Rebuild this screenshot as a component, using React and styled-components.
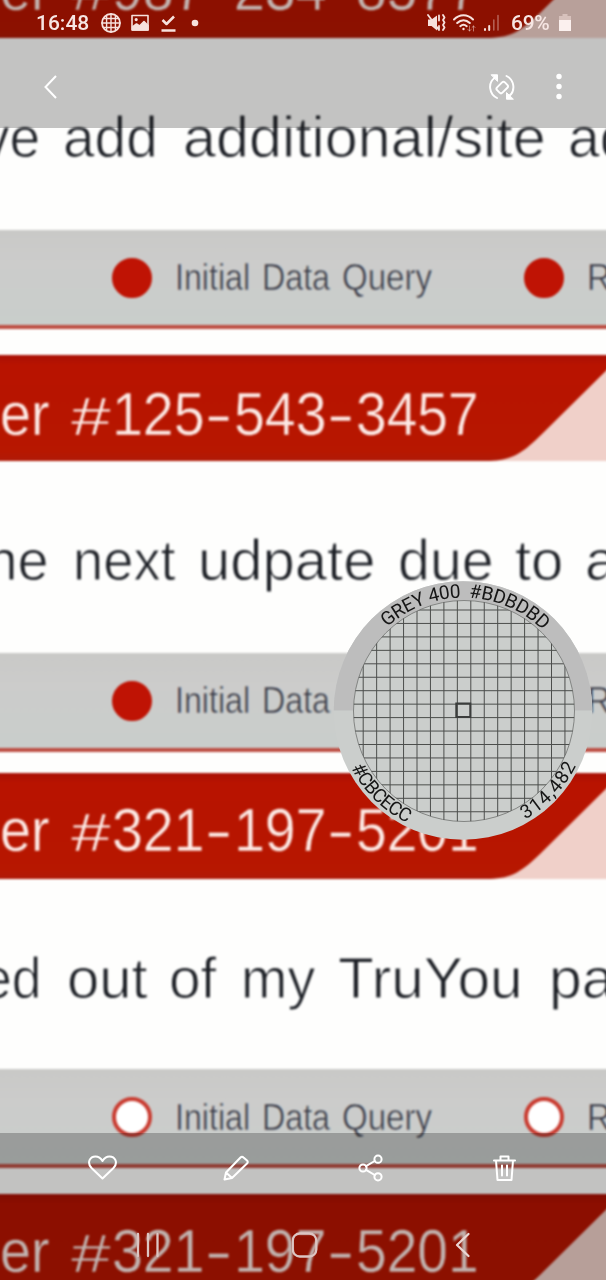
import React, { useLayoutEffect, useRef, useState } from "react";
import styled, { createGlobalStyle } from "styled-components";

const Global = createGlobalStyle`
  * { box-sizing: border-box; }
  body { margin: 0; background: #000; }
`;

const Screen = styled.main`
  position: relative;
  width: 606px;
  height: 1280px;
  overflow: hidden;
  font-family: Roboto, "Liberation Sans", sans-serif;
`;

const Photo = styled.div`
  display: flex;
  flex-direction: column;
  width: 622px;
  height: 1380px;
  margin: -68px 0 0 -8px;
  background: #fefefd;
  filter: blur(0.9px);
  font-family: "Liberation Sans", Arial, sans-serif;
`;

const HeaderBand = styled.div`
  flex: none;
  height: 106px;
  background: #f0d0c9;
`;

const HeaderFill = styled.div`
  height: 106px;
  padding-left: 8px;
  padding-top: ${(p) => p.$drop}px;
  background: linear-gradient(#a91005 0, #b81300 10px, #b71700 96px, #b01a08 106px);
  clip-path: path("M0 0 H630 L552 77 C530 99 520 105 498 106 H0 Z");
`;

const Message = styled.div`
  flex: none;
  height: ${(p) => p.$height}px;
  padding: 70px 0 0 8px;
`;

const Legend = styled.div`
  flex: none;
  display: flex;
  align-items: center;
  height: 95px;
  padding-left: 120px;
  background: linear-gradient(#c9c9c7, #cccccb 35%, #c9cecb);
`;

const Divider = styled.div`
  flex: none;
  height: 4px;
  margin-bottom: ${(p) => p.$gap}px;
  background: #bd4d42;
`;

const Dot = styled.span`
  flex: none;
  width: 40px;
  height: 40px;
  border-radius: 50%;
  border: 4px solid ${(p) => (p.$hollow ? "#c93b30" : "#bf1304")};
  background: ${(p) => (p.$hollow ? "#fff" : "#bf1304")};
`;

const LegendText = styled.div`
  flex: none;
  width: 372px;
  padding-left: 23px;
  margin-top: ${(p) => p.$shift || 0}px;
`;

const Line = styled.div`
  display: flex;
  height: ${(p) => p.$size}px;
  line-height: ${(p) => p.$size}px;
  font-size: ${(p) => p.$size}px;
  color: ${(p) => p.$color};
  -webkit-text-stroke: ${(p) => p.$thin || 0}px ${(p) => p.$ground};
  white-space: nowrap;
`;

const Slot = styled.span`
  flex: none;
  width: ${(p) => p.$width}px;
  margin-left: ${(p) => p.$before}px;
`;

const Stretch = styled.span`
  display: inline-block;
  transform-origin: 0 85%;
`;

function Word({ children, width, before = 0, tall = 1 }) {
  const ref = useRef(null);
  const [scale, setScale] = useState(1);
  useLayoutEffect(() => {
    setScale(width / ref.current.offsetWidth);
  }, [width]);
  return (
    <Slot $width={width} $before={before}>
      <Stretch ref={ref} style={{ transform: `scale(${scale}, ${tall})` }}>
        {children}
      </Stretch>
    </Slot>
  );
}

function Header({ number, drop = 28 }) {
  return (
    <HeaderBand>
      <HeaderFill $drop={drop}>
        <Line $size={62} $color="#fdeae5" $ground="#b71700" $thin={0.5}>
          <Word width={81} before={-31}>ner</Word>
          <Word width={39} before={21} tall={0.86}>#</Word>
          {number.split("-").map((part, i) => (
            <React.Fragment key={i}>
              {i > 0 && <Word width={28} before={1}>-</Word>}
              <Word width={part.length * 30.7} before={i > 0 ? 1 : 2}>{part}</Word>
            </React.Fragment>
          ))}
        </Line>
      </HeaderFill>
    </HeaderBand>
  );
}

function Body({ words, height = 192 }) {
  return (
    <Message $height={height}>
      <Line $size={58} $color="#1d2026" $ground="#fefefd" $thin={1}>
        {words.map(([text, width, before]) => (
          <Word key={text} width={width} before={before}>{text}</Word>
        ))}
      </Line>
    </Message>
  );
}

function Status({ hollow, gap, shift }) {
  return (
    <>
      <Legend>
        <Dot $hollow={hollow} />
        <LegendText $shift={shift}>
          <Line $size={36} $color="#383a46" $ground="#cbcccb" $thin={0.6}>
            <Word width={75}>Initial</Word>
            <Word width={68} before={12}>Data</Word>
            <Word width={90} before={12}>Query</Word>
          </Line>
        </LegendText>
        <Dot $hollow={hollow} />
        <LegendText $shift={shift}>
          <Line $size={36} $color="#383a46" $ground="#cbcccb" $thin={0.6}>
            <Word width={24}>R</Word>
          </Line>
        </LegendText>
      </Legend>
      <Divider $gap={gap} />
    </>
  );
}

const TopShade = styled.header`
  position: absolute;
  inset: 0 0 auto 0;
  height: 128px;
  background: rgba(0, 0, 0, 0.23);
  color: #f6e6e3;
`;

const StatusBar = styled.div`
  display: flex;
  align-items: center;
  justify-content: space-between;
  height: 46px;
  padding: 0 35px 0 36px;
  font-size: 21px;
  font-weight: 500;
  line-height: 46px;
`;

const Group = styled.div`
  display: flex;
  align-items: center;
  gap: ${(p) => p.$gap}px;
`;

const Clock = styled.span`
  width: 55px;
`;

const Percent = styled.span`
  width: 41px;
  margin-left: 4px;
  letter-spacing: -0.3px;
`;

const ToolBar = styled.div`
  display: flex;
  align-items: center;
  justify-content: space-between;
  height: 82px;
  padding: 0 42px 0 39px;
`;

const BottomShade = styled.footer`
  position: absolute;
  inset: auto 0 0 0;
  height: 147px;
  background: rgba(0, 0, 0, 0.235);
`;

const Actions = styled.div`
  display: flex;
  justify-content: space-between;
  align-items: center;
  height: 70px;
  padding: 0 86px 0 87px;
`;

const NavKeys = styled.nav`
  display: flex;
  justify-content: space-between;
  align-items: center;
  height: 84px;
  padding: 0 131px 0 131px;
`;

const Glyph = styled.svg`
  display: block;
  flex: none;
  fill: none;
  stroke: ${(p) => p.$tone || "#fff"};
  stroke-width: ${(p) => p.$weight || 2};
  stroke-linecap: round;
  stroke-linejoin: round;
`;

const Picker = styled.svg`
  position: absolute;
  left: 333px;
  top: 580px;
  display: block;
  font-family: Roboto, sans-serif;
  font-size: 19px;
  fill: #161616;
`;

const tint = "#f6e1dd";

function Magnifier() {
  const lines = Array.from({ length: 16 }, (_, i) => 30.2 + i * 13.45);
  return (
    <Picker width="260" height="261" viewBox="0 0 260 261">
      <defs>
        <clipPath id="lens"><circle cx="131" cy="131" r="110.5" /></clipPath>
        <path id="arcTop" d="M17.5 130.5 A113 113 0 0 1 243.5 130.5" />
        <path id="arcBottom" d="M4 130 A126 126 0 0 0 256 130" />
      </defs>
      <circle cx="130" cy="130.5" r="129.3" fill="#cbcecc" />
      <path d="M.7 130.5 A129.3 129.3 0 0 1 259.3 130.5 Z" fill="#bdbdbd" />
      <circle cx="131" cy="131" r="110.5" fill="#cbcecc" stroke="#838583" strokeWidth="1" />
      <g clipPath="url(#lens)" stroke="#4c4e4c" strokeWidth="1">
        {lines.map((p) => <path key={"v" + p} d={`M${p} 10 V250`} />)}
        {lines.map((p) => <path key={"h" + p} d={`M10 ${p - 0.2} H250`} />)}
      </g>
      <rect x="123.3" y="123.5" width="14" height="13.5" fill="none" stroke="#3b3d3c" strokeWidth="2" />
      <text style={{ whiteSpace: "pre" }}>
        <textPath href="#arcTop" startOffset="93.5" textLength="172">{"GREY 400  #BDBDBD"}</textPath>
      </text>
      <text><textPath href="#arcBottom" startOffset="60" textLength="80">#CBCECC</textPath></text>
      <text><textPath href="#arcBottom" startOffset="263" textLength="75">314,482</textPath></text>
    </Picker>
  );
}

export default function App() {
  return (
    <>
      <Global />
      <Screen>
        <Photo>
          <Header number="987-234-8577" drop={26} />
          <Body words={[["ve", 58, -18], ["add", 95, 23], ["additional/site", 363, 25], ["ad", 64, 22]]} />
          <Status gap={26} />
          <Header number="125-543-3457" />
          <Body words={[["the", 78, -29], ["next", 103, 24], ["udpate", 177, 22], ["due", 96, 23], ["to", 48, 21], ["a", 32, 22]]} />
          <Status gap={21} />
          <Header number="321-197-5201" drop={26} />
          <Body height={190} words={[["ed", 60, -18], ["out", 81, 25], ["of", 47, 21], ["my", 74, 25], ["TruYou", 185, 23], ["pa", 66, 26]]} />
          <Status gap={26} hollow shift={2} />
          <Header number="321-197-5201" drop={26} />
        </Photo>

        <Magnifier />

        <TopShade>
          <StatusBar>
            <Group $gap={10}>
              <Clock>16:48</Clock>
              <Glyph width="20" height="20" viewBox="0 0 20 20" $tone={tint} $weight={1.4}>
                <circle cx="10" cy="10" r="9" strokeWidth="1.8" />
                <path d="M10 1v18M1 10h18M2.5 5.5h15M2.5 14.5h15M5.6 3v14M14.4 3v14" />
              </Glyph>
              <Glyph width="18" height="18" viewBox="0 0 18 18" $tone={tint} $weight={1.6}>
                <path d="M1 1.500h16v14.500H1z" />
                <path d="M1.500 13l4-3 3 2 4.500-4.500 4 4V16h-15.500z" fill={tint} />
                <circle cx="5.200" cy="5.600" r=".8" fill={tint} />
              </Glyph>
              <Glyph width="18" height="20" viewBox="0 0 18 20" $tone={tint} $weight={2.5}>
                <path d="M3.500 7l4 4L15 3.500M2.500 17.500h14" strokeLinecap="butt" />
              </Glyph>
              <Glyph width="16" height="20" viewBox="0 0 16 20">
                <circle cx="8" cy="10" r="3.300" fill={tint} stroke="none" />
              </Glyph>
            </Group>
            <Group $gap={7}>
              <Glyph width="19" height="20" viewBox="0 0 19 20" $tone={tint} $weight={1.8}>
                <path d="M1 6.500h3.500L10 2.500v15l-5.500-4.500H1z" fill={tint} stroke="none" />
                <path d="M1 2l11 15M12 2.500v5M12 13v4M16 2l1.500 2.500L16 7l1.500 2.500L16 12l1.500 2.500L16 17" />
              </Glyph>
              <Glyph width="23" height="20" viewBox="0 0 23 20" $tone={tint} $weight={2}>
                <path d="M1 6.500c5.500-5.600 13.500-5.600 19 0M4.200 10c3.800-3.800 8.800-3.800 12.600 0M7.300 13.200c2-1.800 4.400-1.800 6.400 0" />
                <circle cx="10.500" cy="16" r="1.200" fill={tint} stroke="none" />
                <path d="M16.500 13v5m-1.500-1.500l1.500 1.500 1.500-1.500M20.500 18v-5M19 14.500l1.500-1.500 1.500 1.500" strokeWidth="1" opacity=".5" />
              </Glyph>
              <Glyph width="17" height="20" viewBox="0 0 17 20" $tone={tint} $weight={2}>
                <path d="M2 16v1M6.200 13v4" />
                <path d="M10.800 7v10M15 2.500v14.500" opacity=".4" strokeWidth="1.500" />
              </Glyph>
              <Percent>69%</Percent>
              <Glyph width="12" height="20" viewBox="0 0 12 20">
                <path d="M3.500 1h5v2H12v4H0V3h3.500z" fill={tint} opacity=".5" stroke="none" />
                <path d="M0 7h12v11H0z" fill="#fbf0ee" stroke="none" />
              </Glyph>
            </Group>
          </StatusBar>
          <ToolBar>
            <Glyph width="24" height="28" viewBox="0 0 24 28">
              <path d="M17 3L6.500 14 17 25" strokeLinecap="butt" strokeLinejoin="miter" />
            </Glyph>
            <Group $gap={38}>
              <Glyph width="28" height="28" viewBox="0 0 28 28" $weight={1.9}>
                <path d="M9 25C1 21-.3 10 6.500 5M18.500 3c8 4 9.300 15 2.500 20" />
                <path d="M3.500 1.800h6V8zM25 26.200h-6.500V20z" fill="#fff" strokeWidth="1" />
                <rect x="10.500" y="9" width="7.500" height="11" rx="2" transform="rotate(45 14.200 14.500)" />
              </Glyph>
              <Glyph width="10" height="30" viewBox="0 0 10 30">
                <g fill="#fff" stroke="none">
                  <circle cx="5" cy="4.500" r="2.700" /><circle cx="5" cy="14.500" r="2.700" /><circle cx="5" cy="24.500" r="2.700" />
                </g>
              </Glyph>
            </Group>
          </ToolBar>
        </TopShade>

        <BottomShade>
          <Actions>
            <Glyph width="30" height="28" viewBox="0 0 30 28">
              <path d="M15.500 24.500L4.500 14C-.5 8.500 3 2.500 8.500 2.500c3.500 0 5.500 2 7 4.500 1.500-2.500 3.500-4.500 7-4.500 5.500 0 9 6 4 11.500z" />
            </Glyph>
            <Glyph width="30" height="28" viewBox="0 0 30 28">
              <path d="M3.500 25.500L5 18.500 19.500 3.500Q21 2 22.500 3.500L26 6.500Q27.500 8 26 9.500L11 24zM5 18.500l6 5.500" />
            </Glyph>
            <Glyph width="30" height="28" viewBox="0 0 30 28">
              <circle cx="7" cy="14" r="3.600" /><circle cx="22" cy="5.200" r="3.600" /><circle cx="22" cy="22.800" r="3.600" />
              <path d="M10 12.200l8.700-5.200M10 15.800l8.700 5.200" />
            </Glyph>
            <Glyph width="30" height="28" viewBox="0 0 30 28">
              <path d="M4 6.500h21M10.500 6V2.500h8V6M6 6.500L7.500 26h14L23 6.500M12 11.500v10M17 11.500v10" />
            </Glyph>
          </Actions>
          <NavKeys>
            <Glyph width="30" height="28" viewBox="0 0 30 28" $tone="#dcc5c2" $weight={2.3}>
              <path d="M7 3v22M17 3v22M26.500 3v22" />
            </Glyph>
            <Glyph width="28" height="28" viewBox="0 0 28 28" $tone="#dcc5c2" $weight={2.3}>
              <rect x=".8" y="2.500" width="23.500" height="23" rx="7" />
            </Glyph>
            <Glyph width="24" height="28" viewBox="0 0 24 28" $tone="#ead6d3" $weight={2.3}>
              <path d="M17.500 3L6 14l11.500 11" />
            </Glyph>
          </NavKeys>
        </BottomShade>
      </Screen>
    </>
  );
}
